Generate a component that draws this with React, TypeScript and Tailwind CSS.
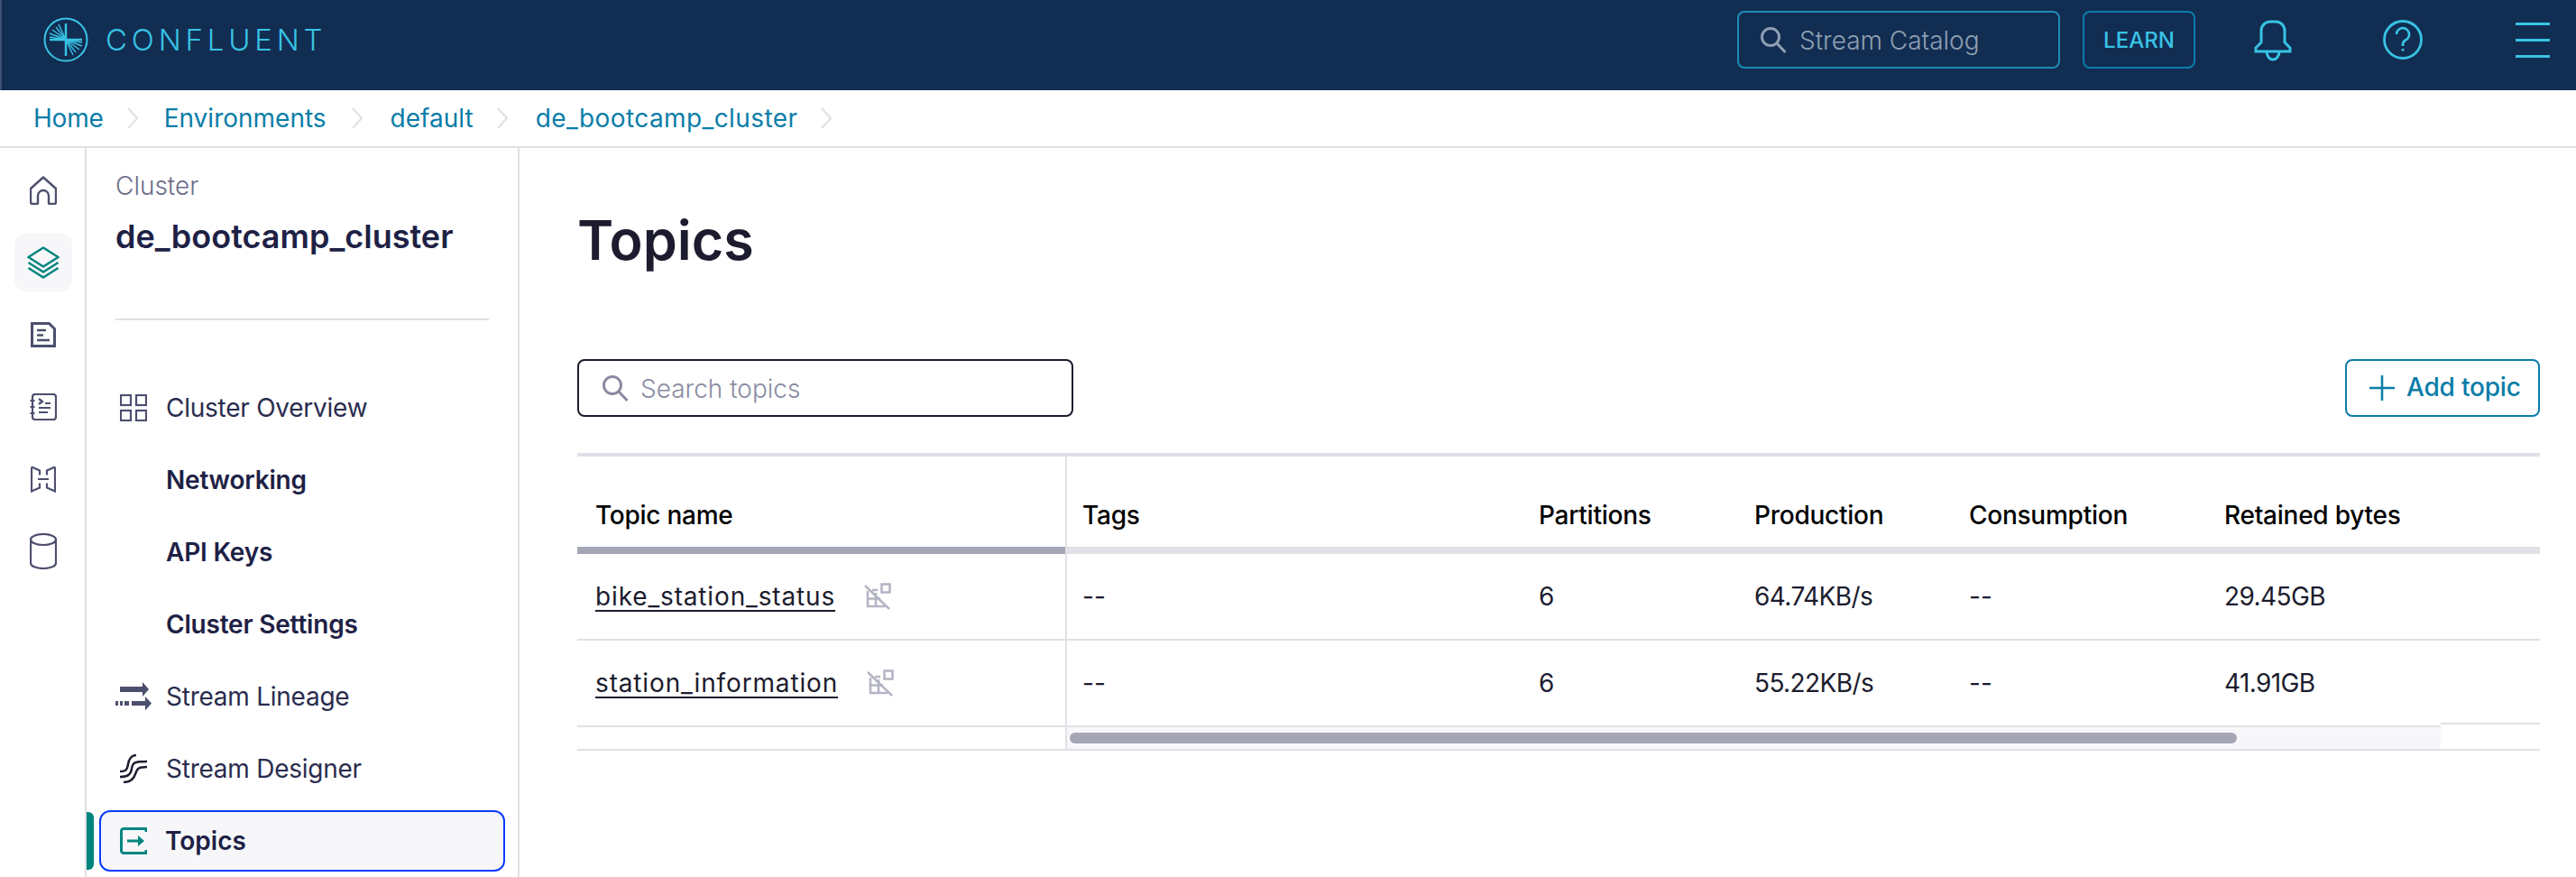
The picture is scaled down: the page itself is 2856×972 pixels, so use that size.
import React from "react";

const Chevron = () => (
  <svg width="12" height="24" viewBox="0 0 12 24" fill="none">
    <path d="M1 1l10 11L1 23" stroke="#e0e0e6" strokeWidth="2" />
  </svg>
);

const Logo = () => {
  const rays: [number, number][] = [
    [-8, -17], [-11, -14], [-15, -11], [-18, -7], [-18, -3],
    [8, 17], [11, 14], [15, 11], [18, 7], [18, 3],
  ];
  return (
    <svg width="50" height="50" viewBox="0 0 50 50" fill="none" stroke="#38c3e4">
      <circle cx="25" cy="25" r="23.5" strokeWidth="2" />
      <path d="M25 7v36M7 25h36" strokeWidth="2.5" />
      {rays.map(([x, y], i) => (
        <line key={i} x1={25} y1={25} x2={25 + x} y2={25 + y} strokeWidth="1.4" />
      ))}
    </svg>
  );
};

const Search = ({ color, size = 30 }: { color: string; size?: number }) => (
  <svg width={size} height={size} viewBox="0 0 30 30" fill="none" stroke={color} strokeWidth="3">
    <circle cx="12" cy="12" r="9.5" />
    <path d="M19 19l9.5 10" />
  </svg>
);

const Bell = () => (
  <svg width="42" height="46" viewBox="0 0 42 46" fill="none" stroke="#38c3e4" strokeWidth="3">
    <path d="M8 25V12a10 10 0 0 1 10-10h6a10 10 0 0 1 10 10v13l6 6v4H2v-4z" />
    <path d="M14 35a7 9 0 0 0 14 0" />
  </svg>
);

const Help = () => (
  <svg width="44" height="44" viewBox="0 0 44 44" fill="none" stroke="#38c3e4" strokeWidth="2.8">
    <circle cx="22" cy="22" r="20.5" />
    <path d="M15 16a7 7 0 1 1 10 6.5c-2 1-3 2.5-3 5V29" />
    <path d="M22 32v2.5" />
  </svg>
);

const HomeIcon = () => (
  <svg width="30" height="32" viewBox="0 0 30 32" fill="none" stroke="#4d4f6e" strokeWidth="2.4" strokeLinejoin="round">
    <path d="M15 1.5L29 14v15a2 2 0 0 1-2 2h-5a1 1 0 0 1-1-1v-8a6 6 0 0 0-12 0v8a1 1 0 0 1-1 1H3a2 2 0 0 1-2-2V14z" />
  </svg>
);
const LayersIcon = () => (
  <svg width="36" height="36" viewBox="0 0 36 36" fill="none" stroke="#00857f" strokeWidth="2.6" strokeLinejoin="round">
    <path d="M18 1.5L34.5 12 18 22.5 1.5 12z" />
    <path d="M1.5 18L18 28.5 34.5 18" />
    <path d="M1.5 24L18 34.5 34.5 24" />
  </svg>
);
const DocIcon = () => (
  <svg width="28" height="28" viewBox="0 0 28 28" fill="none" stroke="#4d4f6e">
    <path d="M1.500 1.500h19l6 6v19h-25z" strokeWidth="3" />
    <path d="M7 9h10M7 14.500h7M7 20h14" strokeWidth="2.500" />
  </svg>
);
const NotebookIcon = () => (
  <svg width="30" height="30" viewBox="0 0 30 30" fill="none" stroke="#4d4f6e" strokeWidth="2.2">
    <rect x="3" y="1" width="26" height="28" rx="3" />
    <path d="M0.500 8h5M0.500 15h5M0.500 22h5" />
    <path d="M10 6l4 3-4 3M17 11h6M10 16h13M10 21h10" />
  </svg>
);
const MapIcon = () => (
  <svg width="28" height="30" viewBox="0 0 28 30" fill="none" stroke="#4d4f6e" strokeWidth="2.2">
    <path d="M1 1.500l9 4v5M27 1.500l-9 4v5M1 1.500v27l9-4v-5M27 1.500v27l-9-4v-5M8 15h12" />
  </svg>
);
const CylinderIcon = () => (
  <svg width="30" height="40" viewBox="0 0 30 40" fill="none" stroke="#4d4f6e" strokeWidth="2.2">
    <ellipse cx="15" cy="7" rx="14" ry="6" />
    <path d="M1 7v26c0 3.500 6 6 14 6s14-2.500 14-6V7" />
  </svg>
);
const GridIcon = () => (
  <svg width="30" height="30" viewBox="0 0 30 30" fill="none" stroke="#4d4f6e" strokeWidth="2.2">
    <rect x="1" y="1" width="11" height="11" />
    <rect x="18" y="1" width="11" height="11" />
    <rect x="1" y="18" width="11" height="11" />
    <rect x="18" y="18" width="11" height="11" />
  </svg>
);
const LineageIcon = () => (
  <svg width="40" height="32" viewBox="0 0 40 32" fill="#4d4f6e">
    <path d="M5 5h25V0l7 8-7 8v-5H5z" />
    <path d="M0 21h3v5H0zM5 21h3v5H5zM10 21h5v5h-5zM18 21h15v-5l7 7.500-7 8V26H18z" />
  </svg>
);
const DesignerIcon = () => (
  <svg width="32" height="32" viewBox="0 0 32 32" fill="none" stroke="#1c1c2e" strokeWidth="2.4">
    <path d="M1 19c7 0 8-2 9-8s4-10 9-10" />
    <path d="M1 25c8 0 12-2 13-9s3-8 17-8" />
    <path d="M5 31c7 0 11-3 13-9s3-8 13-8" />
  </svg>
);
const TopicsIcon = () => (
  <svg width="30" height="30" viewBox="0 0 30 30" fill="none" stroke="#00857f">
    <path d="M29 5V1.500H4A2.500 2.500 0 0 0 1.500 4v22A2.500 2.500 0 0 0 4 28.500h25V25" strokeWidth="3" />
    <path d="M8 15h15" strokeWidth="3" />
    <path d="M20 9l7 6-7 6z" fill="#00857f" stroke="none" />
  </svg>
);
const NoSchema = () => (
  <svg width="31" height="30" viewBox="0 0 31 30" fill="none" stroke="#b3b4c3" strokeWidth="2.500">
    <rect x="19.500" y="1.500" width="9" height="9" />
    <path d="M4 9v17h19M4 17.500h14M13 11v15M9 8h6" />
    <path d="M1 3l27 26" />
  </svg>
);

const NavItem = ({
  icon,
  label,
  bold,
}: {
  icon?: React.ReactNode;
  label: string;
  bold?: boolean;
}) => (
  <div className="h-[80px] flex items-center">
    <div className="w-[56px] shrink-0 flex justify-center pr-[14px] -ml-[1px] mr-[1px]">{icon}</div>
    <span className={bold ? "font-semibold tracking-[-0.2px] text-[#1e2145]" : "tracking-[-0.25px] text-[#2a2c4e]"}>{label}</span>
  </div>
);

const cols = "grid grid-cols-[506px_239px_238px_283px_1fr]";

const Row = ({ cells }: { cells: string[] }) => (
  <div className={`${cols} h-[96px] border-b-2 border-[#e0e0e6] items-center text-[#1c1c2e]`}>
    {cells.map((c, i) => (
      <div key={i} className={c === "--" ? "pl-[17px]" : "pl-[17px] tracking-[-0.6px]"}>
        {c}
      </div>
    ))}
  </div>
);

const TopicCell = ({ name }: { name: string }) => (
  <div className="h-[96px] border-b-2 border-[#e0e0e6] flex items-center pl-[20px] text-[#1c1c2e]">
    <span className="underline underline-offset-[5px] decoration-2 tracking-[0.85px]">{name}</span>
    <span className="ml-[32px] flex">
      <NoSchema />
    </span>
  </div>
);

export default function App() {
  return (
    <div
      className="w-[2856px] h-[972px] overflow-hidden bg-white flex flex-col text-[28px] leading-[34px]"
      style={{ fontFamily: "Inter, 'Liberation Sans', sans-serif" }}
    >
      {/* top bar */}
      <header className="h-[100px] shrink-0 bg-[#122d52] border-l-2 border-[#3b5070] flex items-center pb-[12px]">
        <div className="ml-[46px] flex items-center">
          <Logo />
          <span className="ml-[19px] text-[33px] leading-[40px] font-light tracking-[4.8px] text-[#38c3e4]">CONFLUENT</span>
        </div>
        <div className="ml-auto flex items-center">
          <div className="w-[358px] h-[64px] border-2 border-[#1d8db5] rounded-[8px] flex items-center pl-[23px]">
            <Search color="#8fa0b3" />
            <span className="ml-[14px] mt-[2px] text-[#8fa0b3] font-light">Stream Catalog</span>
          </div>
          <div className="ml-[25px] w-[125px] h-[64px] border-2 border-[#0a7da8] rounded-[8px] flex items-center justify-center pt-[2px] text-[24px] font-medium text-[#38c3e4]">
            LEARN
          </div>
          <div className="ml-[65px] mt-[2px] flex">
            <Bell />
          </div>
          <div className="ml-[101px] flex">
            <Help />
          </div>
          <div className="ml-[103px] mr-[29px] w-[38px] flex flex-col gap-[15px]">
            <div className="h-[3px] bg-[#38c3e4]" />
            <div className="h-[3px] bg-[#38c3e4]" />
            <div className="h-[3px] bg-[#38c3e4]" />
          </div>
        </div>
      </header>

      {/* breadcrumb */}
      <nav className="h-[64px] shrink-0 border-b-2 border-[#e0e0e6] flex items-center pl-[37px] text-[#0a7da8]">
        <span className="tracking-[-0.2px]">Home</span>
        <span className="ml-[26px] mr-[29px] flex"><Chevron /></span>
        <span>Environments</span>
        <span className="ml-[28px] mr-[31px] flex"><Chevron /></span>
        <span>default</span>
        <span className="ml-[26px] mr-[31px] flex"><Chevron /></span>
        <span className="tracking-[0.4px]">de_bootcamp_cluster</span>
        <span className="ml-[26px] flex"><Chevron /></span>
      </nav>

      <div className="flex-1 flex min-h-0">
        {/* rail */}
        <aside className="w-[96px] shrink-0 border-r-2 border-[#e0e0e6] flex flex-col items-center pl-[2px] pt-[7px]">
          <div className="h-[80px] w-[64px] flex items-center justify-center"><HomeIcon /></div>
          <div className="h-[80px] w-[64px] flex items-center justify-center">
            <div className="w-[64px] h-[64px] rounded-[12px] bg-[#f7f7fa] flex items-center justify-center"><LayersIcon /></div>
          </div>
          <div className="h-[80px] w-[64px] flex items-center justify-center"><DocIcon /></div>
          <div className="h-[80px] w-[64px] flex items-center justify-center"><NotebookIcon /></div>
          <div className="h-[80px] w-[64px] flex items-center justify-center"><MapIcon /></div>
          <div className="h-[80px] w-[64px] flex items-center justify-center"><CylinderIcon /></div>
        </aside>

        {/* sidebar */}
        <aside className="w-[480px] shrink-0 border-r-2 border-[#e0e0e6] flex flex-col">
          <div className="pl-[32px] pt-[25px]">
            <div className="text-[#6d6e8a] font-light">Cluster</div>
            <div className="mt-[17px] text-[36px] leading-[44px] font-semibold text-[#1e2145]">de_bootcamp_cluster</div>
            <div className="mt-[69px] w-[414px] h-[2px] bg-[#e0e0e6]" />
          </div>
          <div className="pl-[32px] mt-[57px]">
            <NavItem icon={<GridIcon />} label="Cluster Overview" />
            <NavItem label="Networking" bold />
            <NavItem label="API Keys" bold />
            <NavItem label="Cluster Settings" bold />
            <NavItem icon={<LineageIcon />} label="Stream Lineage" />
            <NavItem icon={<DesignerIcon />} label="Stream Designer" />
          </div>
          <div className="flex items-center h-[68px] mt-[6px]">
            <div className="w-[8px] h-[64px] bg-[#00857f] rounded-r-[6px]" />
            <div className="ml-[6px] w-[450px] h-[68px] border-2 border-[#0a3cff] rounded-[12px] bg-[#f7f7fa] flex items-center">
              <div className="w-[71px] shrink-0 flex justify-center pl-[1px]"><TopicsIcon /></div>
              <span className="font-semibold text-[#1e2145]">Topics</span>
            </div>
          </div>
        </aside>

        {/* main */}
        <main className="flex-1 min-w-0 pl-[64px] pr-[40px]">
          <h1 className="mt-[64px] h-[76px] text-[61px] leading-[76px] font-semibold text-[#1c1c2e]">Topics</h1>
          <div className="mt-[94px] flex justify-between">
            <div className="w-[550px] h-[64px] border-2 border-[#1c1c2e] rounded-[8px] flex items-center pl-[25px]">
              <Search color="#8a8ba2" />
              <span className="ml-[13px] mt-[2px] text-[#8a8ba2] font-light">Search topics</span>
            </div>
            <div className="w-[216px] h-[64px] border-2 border-[#0a7da8] rounded-[8px] flex items-center pl-[25px] text-[#0a7da8] font-medium tracking-[-0.2px]">
              <svg width="28" height="28" viewBox="0 0 28 28" fill="none" stroke="#0a7da8" strokeWidth="2.500">
                <path d="M14 0v28M0 14h28" />
              </svg>
              <span className="ml-[13px] -mt-[2px]">Add topic</span>
            </div>
          </div>

          {/* table */}
          <div className="mt-[40px] border-t-4 border-b-2 border-[#e0e0e6] flex">
            <div className="w-[543px] shrink-0 border-r-2 border-[#e0e0e6]">
              <div className="h-[100px] flex items-end pl-[20px] pb-[18px] font-medium tracking-[-0.25px] text-black">Topic name</div>
              <div className="h-[8px] bg-[#a5a6b5]" />
              <TopicCell name="bike_station_status" />
              <TopicCell name="station_information" />
              <div className="h-[24px]" />
            </div>
            <div className="flex-1 min-w-0">
              <div className={`${cols} h-[100px] items-end pb-[18px] font-medium tracking-[-0.25px] text-black`}>
                <div className="pl-[17px]">Tags</div>
                <div className="pl-[17px]">Partitions</div>
                <div className="pl-[17px]">Production</div>
                <div className="pl-[17px]">Consumption</div>
                <div className="pl-[17px]">Retained bytes</div>
              </div>
              <div className="h-[8px] bg-[#e0e0e6]" />
              <Row cells={["--", "6", "64.74KB/s", "--", "29.45GB"]} />
              <Row cells={["--", "6", "55.22KB/s", "--", "41.91GB"]} />
              <div className="flex h-[24px] -mt-[2px] box-content">
                <div className="w-[1523px] h-[26px] border-t-2 border-[#e0e0e6] bg-[#f7f7fa] pl-[3px] pt-[6px]">
                  <div className="w-[1294px] h-[12px] rounded-full bg-[#a5a6b5]" />
                </div>
                <div className="flex-1 h-[29px] -mt-[3px] border-t-2 border-[#e0e0e6] bg-white" />
              </div>
            </div>
          </div>
        </main>
      </div>
    </div>
  );
}
